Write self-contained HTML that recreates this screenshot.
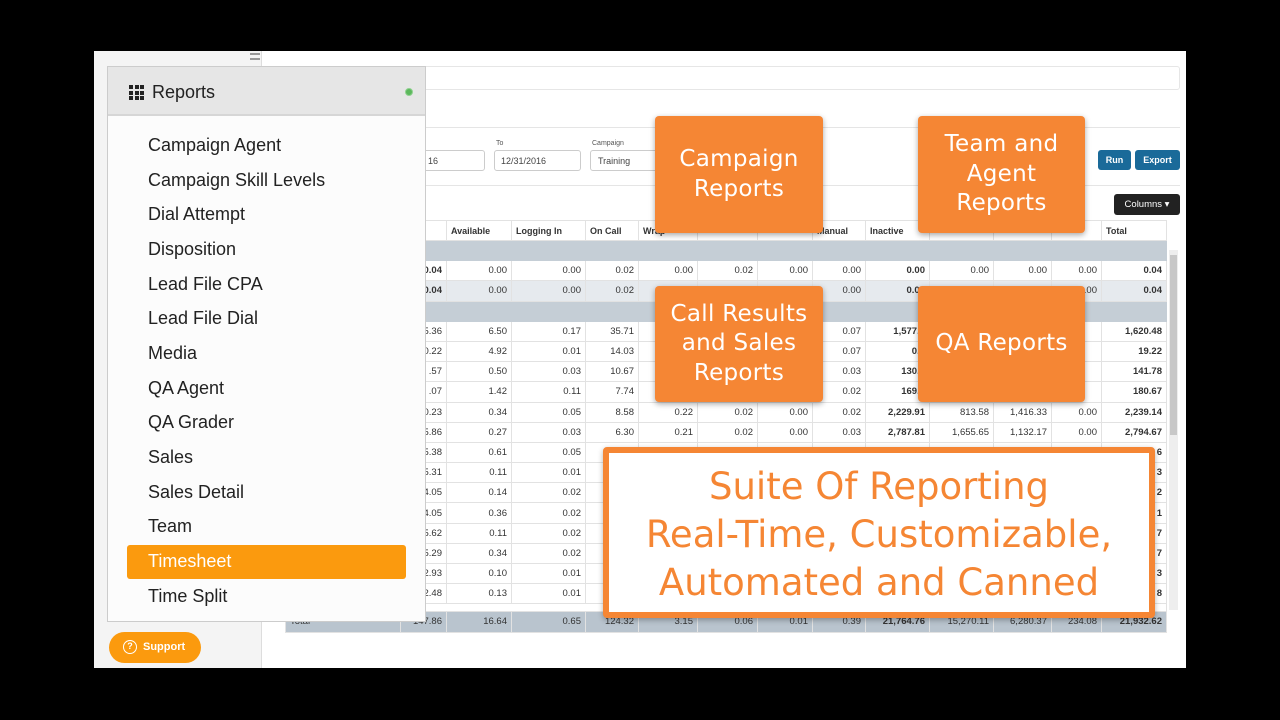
<!DOCTYPE html>
<html><head><meta charset="utf-8"><style>
*{margin:0;padding:0;box-sizing:border-box}
body{width:1280px;height:720px;background:#000;position:relative;overflow:hidden;font-family:"Liberation Sans",Arial,sans-serif}
.abs{position:absolute}
#frame{left:94px;top:51px;width:1092px;height:617px;background:#fff}
#lside{left:94px;top:51px;width:168px;height:617px;background:#f4f4f4;border-right:1px solid #ddd}
table{border-collapse:collapse;table-layout:fixed;position:absolute;left:285px;top:220px;font-size:9.5px;color:#333}
td{border:1px solid #e2e2e2;text-align:right;padding:0 4px;height:20.2px;white-space:nowrap;overflow:hidden}
tr.h td{height:20px;text-align:left;font-weight:bold;background:#fff;font-size:9px}
tr.g td{background:#c5ced6;border-color:#c5ced6}
tr.s td{background:#e6eaee}
tr.t td{background:#b9c4ce}
td.b{font-weight:bold}
.box{position:absolute;background:#f58634;color:#fff;border-radius:4px;text-align:center;font-size:23px;line-height:29.5px;display:flex;align-items:center;justify-content:center;box-shadow:0 2px 6px rgba(0,0,0,.35);font-family:"DejaVu Sans","Liberation Sans",sans-serif;letter-spacing:.3px}
#menu{left:107px;top:66px;width:319px;height:556px;background:#fcfcfc;border:1px solid #ccc}
#mh{left:0;top:0;width:317px;height:49px;background:#e6e6e6;border-bottom:2px solid #d6d6d6}
.mi{position:absolute;left:40px;font-size:18px;color:#222}
</style></head><body>
<div id="frame" class="abs"></div>
<div id="lside" class="abs"></div>
<div class="abs" style="left:262px;top:66px;width:918px;height:24px;border:1px solid #e6e6e6;border-radius:3px;background:#fff"></div>
<div class="abs" style="left:250px;top:53px;width:10px;height:7px;border-top:2px solid #999;border-bottom:2px solid #999"></div>
<div class="abs" style="left:262px;top:127px;width:918px;border-top:1px solid #e5e5e5"></div>
<div class="abs" style="left:262px;top:185px;width:918px;border-top:1px solid #e5e5e5"></div>
<div class="abs" style="left:496px;top:140px;font-size:7px;color:#555">To</div>
<div class="abs" style="left:592px;top:140px;font-size:7px;color:#555">Campaign</div>
<div class="abs" style="left:415px;top:150px;width:70px;height:21px;border:1px solid #ccc;border-radius:3px;font-size:9px;color:#444;padding:5px 12px">16</div>
<div class="abs" style="left:494px;top:150px;width:87px;height:21px;border:1px solid #ccc;border-radius:3px;font-size:9px;color:#444;padding:5px 6px">12/31/2016</div>
<div class="abs" style="left:590px;top:150px;width:70px;height:21px;border:1px solid #ccc;border-radius:3px;font-size:9px;color:#444;padding:5px 7px">Training</div>
<div class="abs" style="left:1098px;top:150px;width:33px;height:20px;background:#1a6a99;border-radius:3px;color:#fff;font-size:9px;font-weight:bold;text-align:center;line-height:20px">Run</div>
<div class="abs" style="left:1135px;top:150px;width:45px;height:20px;background:#1a6a99;border-radius:3px;color:#fff;font-size:9px;font-weight:bold;text-align:center;line-height:20px">Export</div>
<div class="abs" style="left:1114px;top:194px;width:66px;height:21px;background:#222;border-radius:3px;color:#fff;font-size:9.5px;text-align:center;line-height:21px">Columns ▾</div>
<div class="abs" style="left:1169px;top:250px;width:9px;height:360px;background:#eee"><div style="margin:5px 1px;height:180px;background:#c8c8c8"></div></div>

<table>
<colgroup><col style="width:115px"><col style="width:46px"><col style="width:65px"><col style="width:74px"><col style="width:53px"><col style="width:59px"><col style="width:60px"><col style="width:55px"><col style="width:53px"><col style="width:64px"><col style="width:64px"><col style="width:58px"><col style="width:50px"><col style="width:65px"></colgroup>
<tr class="h"><td></td><td>▾</td><td>Available</td><td>Logging In</td><td>On Call</td><td>Wrap</td><td></td><td></td><td>Manual</td><td>Inactive</td><td></td><td></td><td></td><td>Total</td></tr>
<tr class="g"><td colspan="14">&nbsp;</td></tr>
<tr><td></td><td class="b">0.04</td><td>0.00</td><td>0.00</td><td>0.02</td><td>0.00</td><td>0.02</td><td>0.00</td><td>0.00</td><td class="b">0.00</td><td>0.00</td><td>0.00</td><td>0.00</td><td class="b">0.04</td></tr>
<tr class="s"><td></td><td class="b">0.04</td><td>0.00</td><td>0.00</td><td>0.02</td><td>0.00</td><td>0.02</td><td>0.00</td><td>0.00</td><td class="b">0.00</td><td>0.00</td><td>0.00</td><td>0.00</td><td class="b">0.04</td></tr>
<tr class="g"><td colspan="14">&nbsp;</td></tr>
<tr><td></td><td>5.36</td><td>6.50</td><td>0.17</td><td>35.71</td><td></td><td></td><td></td><td>0.07</td><td class="b">1,577.1</td><td></td><td></td><td></td><td class="b">1,620.48</td></tr>
<tr><td></td><td>0.22</td><td>4.92</td><td>0.01</td><td>14.03</td><td></td><td></td><td></td><td>0.07</td><td class="b">0.0</td><td></td><td></td><td></td><td class="b">19.22</td></tr>
<tr><td></td><td>.57</td><td>0.50</td><td>0.03</td><td>10.67</td><td></td><td></td><td></td><td>0.03</td><td class="b">130.2</td><td></td><td></td><td></td><td class="b">141.78</td></tr>
<tr><td></td><td>.07</td><td>1.42</td><td>0.11</td><td>7.74</td><td></td><td></td><td></td><td>0.02</td><td class="b">169.0</td><td></td><td></td><td></td><td class="b">180.67</td></tr>
<tr><td></td><td>0.23</td><td>0.34</td><td>0.05</td><td>8.58</td><td>0.22</td><td>0.02</td><td>0.00</td><td>0.02</td><td class="b">2,229.91</td><td>813.58</td><td>1,416.33</td><td>0.00</td><td class="b">2,239.14</td></tr>
<tr><td></td><td>5.86</td><td>0.27</td><td>0.03</td><td>6.30</td><td>0.21</td><td>0.02</td><td>0.00</td><td>0.03</td><td class="b">2,787.81</td><td>1,655.65</td><td>1,132.17</td><td>0.00</td><td class="b">2,794.67</td></tr>
<tr><td></td><td>5.38</td><td>0.61</td><td>0.05</td><td></td><td></td><td></td><td></td><td></td><td></td><td></td><td></td><td></td><td class="b">6</td></tr>
<tr><td></td><td>5.31</td><td>0.11</td><td>0.01</td><td></td><td></td><td></td><td></td><td></td><td></td><td></td><td></td><td></td><td class="b">3</td></tr>
<tr><td></td><td>4.05</td><td>0.14</td><td>0.02</td><td></td><td></td><td></td><td></td><td></td><td></td><td></td><td></td><td></td><td class="b">2</td></tr>
<tr><td></td><td>4.05</td><td>0.36</td><td>0.02</td><td></td><td></td><td></td><td></td><td></td><td></td><td></td><td></td><td></td><td class="b">1</td></tr>
<tr><td></td><td>5.62</td><td>0.11</td><td>0.02</td><td></td><td></td><td></td><td></td><td></td><td></td><td></td><td></td><td></td><td class="b">7</td></tr>
<tr><td></td><td>5.29</td><td>0.34</td><td>0.02</td><td></td><td></td><td></td><td></td><td></td><td></td><td></td><td></td><td></td><td class="b">7</td></tr>
<tr><td></td><td>2.93</td><td>0.10</td><td>0.01</td><td></td><td></td><td></td><td></td><td></td><td></td><td></td><td></td><td></td><td class="b">3</td></tr>
<tr><td></td><td>2.48</td><td>0.13</td><td>0.01</td><td></td><td></td><td></td><td></td><td></td><td></td><td></td><td></td><td></td><td class="b">8</td></tr>
<tr><td colspan="14" style="height:8px"></td></tr>
<tr class="t"><td style="text-align:left">Total</td><td>147.86</td><td>16.64</td><td>0.65</td><td>124.32</td><td>3.15</td><td>0.06</td><td>0.01</td><td>0.39</td><td class="b">21,764.76</td><td>15,270.11</td><td>6,280.37</td><td>234.08</td><td class="b">21,932.62</td></tr>
</table>

<div id="menu" class="abs">
<div id="mh" class="abs">
<div class="abs" style="left:21px;top:18px;width:15px;height:15px;display:grid;grid-template-columns:repeat(3,4px);gap:1.5px">
<i style="background:#222;height:4px"></i><i style="background:#222;height:4px"></i><i style="background:#222;height:4px"></i><i style="background:#222;height:4px"></i><i style="background:#222;height:4px"></i><i style="background:#222;height:4px"></i><i style="background:#222;height:4px"></i><i style="background:#222;height:4px"></i><i style="background:#222;height:4px"></i></div>
<div class="abs" style="left:44px;top:15px;font-size:18px;color:#222">Reports</div>
<div class="abs" style="left:297px;top:21px;width:8px;height:8px;border-radius:50%;background:#5cb85c;border:1px solid #8fd18f"></div>
</div>
<div class="mi" style="top:68px">Campaign Agent</div>
<div class="mi" style="top:103px">Campaign Skill Levels</div>
<div class="mi" style="top:137px">Dial Attempt</div>
<div class="mi" style="top:172px">Disposition</div>
<div class="mi" style="top:207px">Lead File CPA</div>
<div class="mi" style="top:241px">Lead File Dial</div>
<div class="mi" style="top:276px">Media</div>
<div class="mi" style="top:311px">QA Agent</div>
<div class="mi" style="top:345px">QA Grader</div>
<div class="mi" style="top:380px">Sales</div>
<div class="mi" style="top:415px">Sales Detail</div>
<div class="mi" style="top:449px">Team</div>
<div class="abs" style="left:19px;top:478px;width:279px;height:34px;background:#fb9a0e;border-radius:3px"></div>
<div class="mi" style="top:484px;color:#fff">Timesheet</div>
<div class="mi" style="top:519px">Time Split</div>
</div>

<div class="abs" style="left:109px;top:632px;width:92px;height:31px;background:#fb9a0e;border-radius:16px;color:#fff;font-size:11px;font-weight:bold;line-height:31px;padding-left:14px"><span style="display:inline-block;width:14px;height:14px;border:1.5px solid #fff;border-radius:50%;font-size:9px;line-height:11px;text-align:center;vertical-align:middle;margin-right:6px">?</span>Support</div>

<div class="box" style="left:655px;top:116px;width:168px;height:117px">Campaign<br>Reports</div>
<div class="box" style="left:918px;top:116px;width:167px;height:117px">Team and<br>Agent<br>Reports</div>
<div class="box" style="left:655px;top:286px;width:168px;height:116px">Call Results<br>and Sales<br>Reports</div>
<div class="box" style="left:918px;top:286px;width:167px;height:116px">QA Reports</div>
<div class="abs" style="left:603px;top:447px;width:552px;height:171px;background:#fff;border:6px solid #f58634;border-radius:4px;color:#f58634;text-align:center;font-size:37px;line-height:48px;padding-top:10px;font-family:'DejaVu Sans','Liberation Sans',sans-serif;box-shadow:0 2px 6px rgba(0,0,0,.3)">Suite Of Reporting<br>Real-Time, Customizable,<br>Automated and Canned</div>
</body></html>
